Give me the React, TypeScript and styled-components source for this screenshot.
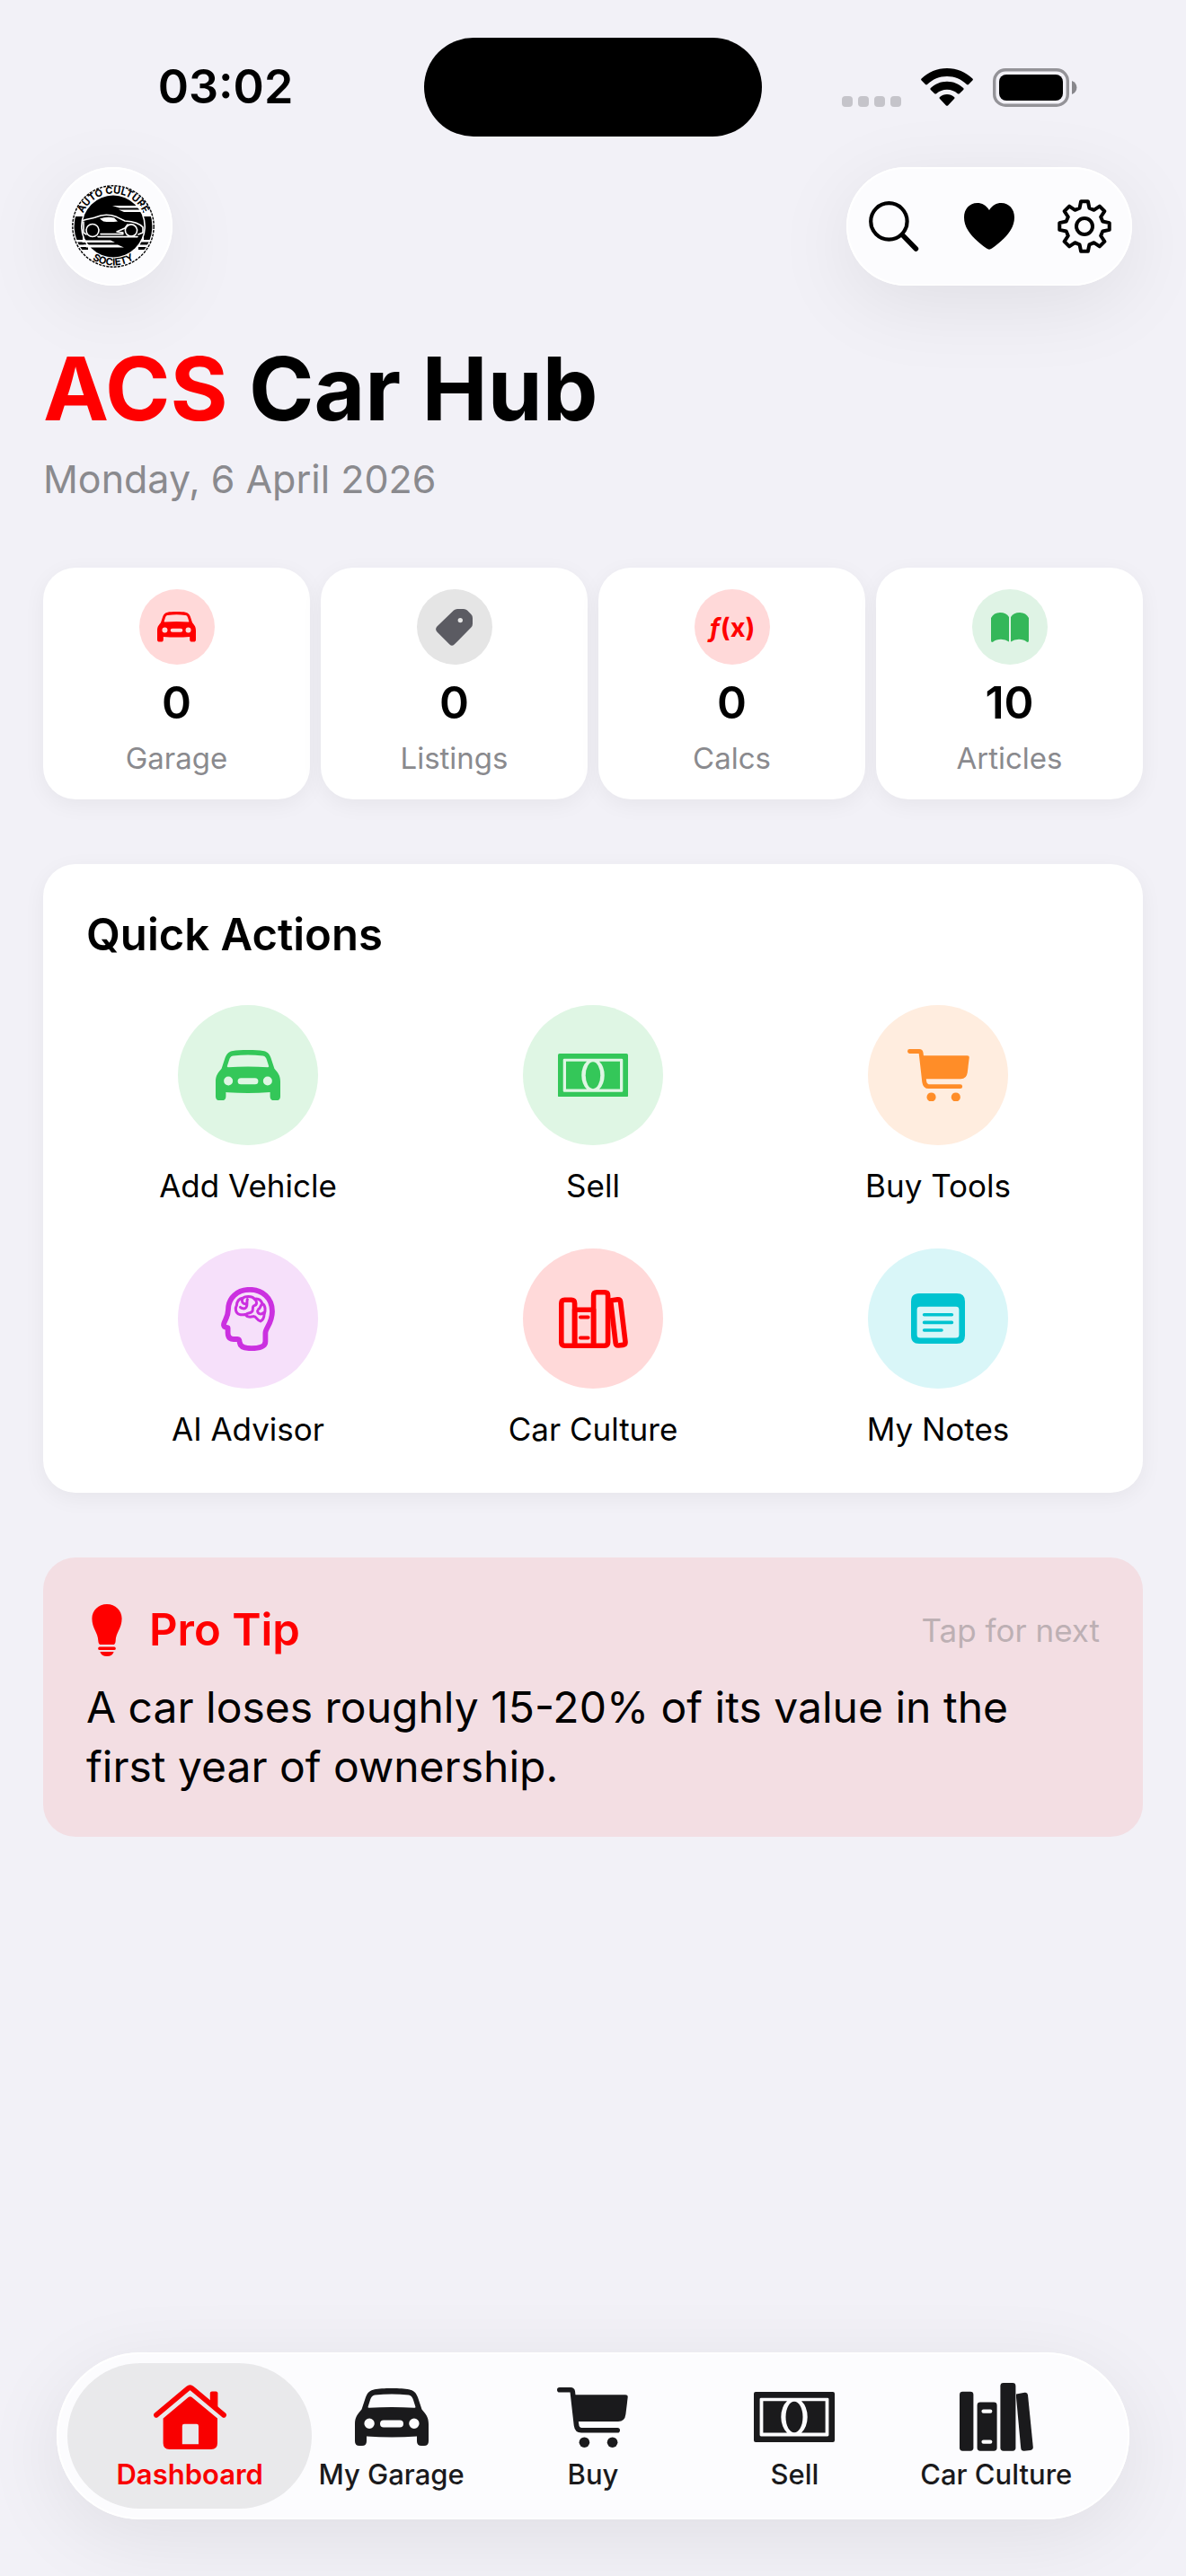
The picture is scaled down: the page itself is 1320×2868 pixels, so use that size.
import { ReactNode, useState } from 'react';
import styled, { createGlobalStyle } from 'styled-components';

const TIPS = [
  'A car loses roughly 15-20% of its value in the first year of ownership.',
  'Check your tyre pressures at least once a month, and always when they are cold.',
];

type IconProps = { width: number };

const CarIcon = ({ width }: IconProps) => (
  <svg width={width} viewBox="0 0 82 64" fill="currentColor" aria-hidden="true">
    <path
      fillRule="evenodd"
      d="M41 0C49 0 56 .4 60 1.2C65 2 68 4.5 70 10L74.5 23.5C79 29 82 32 82 40V59Q82 64 77 64H74Q69 64 69 59V53.5Q55 54.6 41 54.6Q27 54.6 13 53.5V59Q13 64 8 64H5Q0 64 0 59V40C0 32 3 29 7.5 23.5L12 10C14 4.5 17 2 22 1.2C26 .4 33 0 41 0ZM22 7.4C19 8 18 10 17 13L14.6 20.5Q14.3 22 16 21.8Q28 21 41 21Q54 21 66 21.8Q67.7 22 67.4 20.5L65 13C64 10 63 8 60 7.4Q50 6.4 41 6.4Q32 6.4 22 7.4ZM10.4 39.3a5.7 5.7 0 1 0 11.4 0a5.7 5.7 0 1 0 -11.4 0ZM60.2 39.3a5.7 5.7 0 1 0 11.4 0a5.7 5.7 0 1 0 -11.4 0ZM32 35.6a4 4 0 0 0 0 8H50a4 4 0 0 0 0 -8Z"
    />
  </svg>
);

const BanknoteIcon = ({ width }: IconProps) => (
  <svg width={width} viewBox="0 0 90 56" fill="currentColor" aria-hidden="true">
    <path
      fillRule="evenodd"
      d="M2 0H88Q90 0 90 2V54Q90 56 88 56H2Q0 56 0 54V2Q0 0 2 0ZM8 6.7Q6.6 6.7 6.6 8V48Q6.6 49.4 8 49.4H82Q83.4 49.4 83.4 48V8Q83.4 6.7 82 6.7Z"
    />
    <path d="M10.4 10.2H37A13.5 20.5 0 0 0 37 45.6H10.4Z" />
    <path d="M79.6 10.2H53A13.5 20.5 0 0 1 53 45.6H79.6Z" />
    <ellipse cx="45" cy="28" rx="9.5" ry="17.2" />
  </svg>
);

const CartIcon = ({ width }: IconProps) => (
  <svg width={width} viewBox="0 0 79 67" fill="currentColor" aria-hidden="true">
    <path
      d="M2.8 2.8H15Q17 2.8 17.3 5L21.5 42Q22.3 47.7 27 47.7H67.2"
      fill="none"
      stroke="currentColor"
      strokeWidth="5.6"
      strokeLinecap="round"
      strokeLinejoin="round"
    />
    <path d="M18 8.2H76Q79 8.2 78.7 11L76.4 30Q75.4 38 68 38H21Z" />
    <circle cx="30.4" cy="61.2" r="5.8" />
    <circle cx="61.6" cy="61.2" r="5.8" />
  </svg>
);

const HouseIcon = () => (
  <svg width="81" viewBox="0 0 81 72" fill="currentColor" aria-hidden="true">
    <path
      d="M3 33.8L38.2 4.2Q40.5 2.3 42.8 4.2L78 33.8"
      fill="none"
      stroke="currentColor"
      strokeWidth="5.8"
      strokeLinecap="round"
    />
    <path d="M62.8 20V9.6Q62.8 7.6 64.8 7.6H69.4Q71.4 7.6 71.4 9.6V27.4Z" />
    <path
      fillRule="evenodd"
      d="M38.6 14Q40.6 12.3 42.6 14L71 37.4V65Q71 72 64 72H17.6Q10.6 72 10.6 65V37.4ZM34 43.8Q31.8 43.8 31.8 46V66.2H50V46Q50 43.8 47.8 43.8Z"
    />
  </svg>
);

const BooksIcon = () => (
  <svg width="82" viewBox="0 0 82 76" fill="currentColor" aria-hidden="true">
    <rect x="0" y="9.7" width="15.4" height="66" rx="3.4" />
    <path
      fillRule="evenodd"
      d="M23 21.6H38.2Q41.6 21.6 41.6 25V72.3Q41.6 75.7 38.2 75.7H23Q19.6 75.7 19.6 72.3V25Q19.6 21.6 23 21.6ZM26.6 29.4a2.2 2.2 0 0 0 0 4.4H34.2a2.2 2.2 0 0 0 0 -4.4ZM26.6 63.4a2.2 2.2 0 0 0 0 4.4H34.2a2.2 2.2 0 0 0 0 -4.4Z"
    />
    <rect x="45.4" y="0" width="17" height="75.7" rx="3.4" />
    <path d="M63 12.6L72.4 10.8Q75.6 10.2 76 13.4L81.8 71.4Q82 74.4 79 74.9L72 75.8Q68.6 76.2 68.2 72.6L63 16Z" />
  </svg>
);

const BooksOutlineIcon = () => (
  <svg width="77" viewBox="0 0 77 65" fill="none" stroke="currentColor" strokeWidth="5.6" strokeLinejoin="round" aria-hidden="true">
    <path d="M17.6 62.2H6.4Q2.8 62.2 2.8 58.6V15Q2.8 11.2 6.4 11.2H14Q17.6 11.2 17.6 15Z" />
    <path d="M17.6 22.2H38.6V62.2H17.6Z" />
    <path d="M38.6 62.2V6.4Q38.6 2.8 42.2 2.8H51Q54.6 2.8 54.6 6.4V58.6Q54.6 62.2 51 62.2Z" />
    <path d="M57.6 12L65.4 10.8Q68.2 10.6 68.6 13.4L74 58Q74.2 61 71.4 61.4L66.4 62Q63.6 62.2 63.2 59.4Z" />
    <path d="M24 30.6H32.6M24 53.4H32.6" strokeWidth="4" strokeLinecap="round" />
  </svg>
);

const BrainHeadIcon = () => (
  <svg width="60" viewBox="0 0 60 71" fill="none" stroke="currentColor" strokeWidth="5.8" strokeLinecap="round" strokeLinejoin="round" aria-hidden="true">
    <path d="M32 2.8C18 2.8 8 12 8 25C8 31 6.4 33.6 4 38.4C2.4 41.8 2.6 44.2 5.6 44.8L7.6 45.4V51C7.6 56 10 58 14 58H18.4C20.6 58 20.6 60 20.8 62C21.4 66.6 26 68.2 34 68.2C42 68.2 49.4 66.4 49.4 60.6V51C49.4 46 57 40 57 27C57 12 46 2.8 32 2.8Z" />
    <g strokeWidth="3">
      <path d="M24 12.2C19.4 13 17.6 17 17.4 20.4C15.4 23.4 16 29 20.4 30.4C23.4 31.4 26 30.6 27.6 30.4C28.4 33.6 33.4 33.2 36 32.6C40 32.6 39.8 37.6 44 38C46.8 36.4 48 33.6 48 30.6C49.8 26 49.6 20.4 46 18.4C44.4 14.4 41 12.6 37.4 13.2C34 9.4 27 10 24 12.2Z" />
      <path d="M24 12.6C22.4 16 24 19 27.6 18.6M29.4 13.6C28 17.4 30 20 28 22.6C26 25 22.8 23.6 21.4 22.4M37.6 13.6C40.6 16 40 20 37 20.6C34 21.4 36.6 25 34.4 27.4C32.4 29.4 29.4 28.6 28 30.2M46 18.8C43.4 20 44.4 23.4 41.6 24.6M47.6 28.4C45 31 41 30.4 40.6 26.6" />
    </g>
  </svg>
);

const NotesIcon = () => (
  <svg width="60" viewBox="0 0 60 56" fill="currentColor" aria-hidden="true">
    <path
      fillRule="evenodd"
      d="M9 0H51Q60 0 60 9V47Q60 56 51 56H9Q0 56 0 47V9Q0 0 9 0ZM10 14.8Q6.6 14.8 6.6 18.2V46Q6.6 49.6 10.2 49.6H49.8Q53.4 49.6 53.4 46V18.2Q53.4 14.8 50 14.8Z"
    />
    <path d="M14.6 23.8H45.4M14.6 32.4H45.4M14.6 41H34" stroke="currentColor" strokeWidth="3.6" strokeLinecap="round" />
  </svg>
);

const TagIcon = () => (
  <svg width="41" viewBox="0 0 41 41" fill="currentColor" aria-hidden="true">
    <path
      fillRule="evenodd"
      d="M24 0H31Q33.4 0 35 1.6L39.4 6Q41 7.6 41 10V16.6Q41 19 39.4 20.6L20.6 39.6Q18 42 15.4 39.6L1.4 25.4Q-1.2 22.4 1.4 19.6L20 1.6Q21.8 0 24 0ZM24.6 12.6a2.7 2.7 0 1 0 5.4 0a2.7 2.7 0 1 0 -5.4 0Z"
    />
  </svg>
);

const OpenBookIcon = () => (
  <svg width="42" viewBox="0 0 42 33" fill="currentColor" aria-hidden="true">
    <path d="M0 6Q3 0 10 0Q17 0 20 5V32.4Q16.4 29.8 11 29.8Q5.6 29.8 2.4 32.6Q0 33.6 0 31Z" />
    <path d="M42 6Q39 0 32 0Q25 0 22 5V32.4Q25.6 29.8 31 29.8Q36.4 29.8 39.6 32.6Q42 33.6 42 31Z" />
  </svg>
);

const BulbIcon = () => (
  <svg width="34" viewBox="0 0 34 58" fill="currentColor" aria-hidden="true">
    <path d="M17 0C26.5 0 33.6 7 33.6 16C33.6 27 27 31 26.6 41.4Q26.4 45 23.4 45H10.6Q7.6 45 7.4 41.4C7 31 .4 27 .4 16C.4 7 7.5 0 17 0Z" />
    <rect x="7.2" y="47.6" width="19.6" height="3.4" rx="1.6" />
    <path d="M9.4 53H24.6Q23.4 58 17 58Q10.6 58 9.4 53Z" />
  </svg>
);

const SearchIcon = () => (
  <svg width="56" viewBox="0 0 56 56" fill="none" stroke="currentColor" strokeLinecap="round" aria-hidden="true">
    <circle cx="22.4" cy="22.4" r="20.2" strokeWidth="4.2" />
    <path d="M38.4 38.6L52.4 53" strokeWidth="5.6" />
  </svg>
);

const HeartIcon = () => (
  <svg width="56" viewBox="0 0 56 52" fill="currentColor" aria-hidden="true">
    <path d="M28 8C31.4 2.6 36 0 41.4 0C50 0 56 6.8 56 16C56 29.6 45 40.6 31 50.6Q28 52.8 25 50.6C11 40.6 0 29.6 0 16C0 6.8 6 0 14.6 0C20 0 24.6 2.6 28 8Z" />
  </svg>
);

// eight teeth around the centre, each with a wider base than tip
const gearPath = Array.from({ length: 8 })
  .flatMap((_, i) =>
    [
      [21, -15],
      [28, -8],
      [28, 8],
      [21, 15],
    ].map(([r, offset]) => {
      const angle = ((i * 45 + offset) * Math.PI) / 180;
      return `${(30 + r * Math.sin(angle)).toFixed(2)} ${(30 - r * Math.cos(angle)).toFixed(2)}`;
    })
  )
  .join('L');

const GearIcon = () => (
  <svg width="60" viewBox="0 0 60 60" fill="none" stroke="currentColor" strokeWidth="4" strokeLinejoin="round" aria-hidden="true">
    <path d={`M${gearPath}Z`} />
    <circle cx="30" cy="30" r="9" />
  </svg>
);

const WifiIcon = () => (
  <svg width="58" viewBox="0 0 58 42" fill="currentColor" aria-hidden="true">
    <path d="M29 0C40 0 50 4.4 57.4 11.6Q58.4 12.6 57.4 13.6L53 18Q52 18.8 51 18C45 12.2 37.4 9 29 9C20.6 9 13 12.2 7 18Q6 18.8 5 18L.6 13.6Q-.4 12.6 .6 11.6C8 4.4 18 0 29 0Z" />
    <path d="M29 14.8C36 14.8 42.4 17.6 47.2 22Q48.2 23 47.2 24L42.8 28.2Q41.8 29 40.8 28.2C37.6 25.4 33.6 23.8 29 23.8C24.4 23.8 20.4 25.4 17.2 28.2Q16.2 29 15.2 28.2L10.8 24Q9.8 23 10.8 22C15.6 17.6 22 14.8 29 14.8Z" />
    <path d="M29 29C32 29 34.8 30.2 37 32Q38 33 37 34L30 41.4Q29 42.2 28 41.4L21 34Q20 33 21 32C23.2 30.2 26 29 29 29Z" />
  </svg>
);

const BatteryIcon = () => (
  <svg width="94" viewBox="0 0 94 43" aria-hidden="true">
    <rect x="1.7" y="1.7" width="81.6" height="39.6" rx="12.4" fill="none" stroke="#949398" strokeWidth="3.4" />
    <rect x="7" y="7" width="71" height="29" rx="8" />
    <path d="M88 14Q93.4 16.4 93.4 21.5Q93.4 26.6 88 29Z" fill="#88878c" />
  </svg>
);

const SocietyLogo = () => (
  <LogoSvg viewBox="-4 -4 100 100" role="img" aria-label="Auto Culture Society">
    <defs>
      <path id="logo-top" d="M9.5 46A36.5 36.5 0 0 1 82.5 46" />
      <path id="logo-bottom" d="M2.5 46A43.5 43.5 0 0 0 89.5 46" />
      <clipPath id="logo-ring">
        <path clipRule="evenodd" d="M2.6 46a43.4 43.4 0 1 0 86.8 0a43.4 43.4 0 1 0 -86.8 0ZM10 46a36 36 0 1 0 72 0a36 36 0 1 0 -72 0Z" />
      </clipPath>
    </defs>
    <circle cx="46" cy="46" r="45.2" fill="none" stroke="#000" strokeWidth="1.4" strokeDasharray="3 1.2" />
    <circle cx="46" cy="46" r="34.4" />
    <g clipPath="url(#logo-ring)">
      <path d="M0 35H12V61H0ZM80 35H92V61H80ZM0 63.5H16V66.5H0ZM76 63.5H92V66.5H76ZM0 69H18V72H0ZM74 69H92V72H74Z" />
    </g>
    <g fontFamily="Inter, sans-serif" fontSize="11" fontWeight="700" textAnchor="middle">
      <text>
        <textPath href="#logo-top" startOffset="50%">AUTO CULTURE</textPath>
      </text>
      <text>
        <textPath href="#logo-bottom" startOffset="50%">SOCIETY</textPath>
      </text>
    </g>
    <g fill="none" stroke="#fff" strokeWidth="1.6" strokeLinecap="round" strokeLinejoin="round">
      <path d="M12 39.5C18 37.6 22 37.4 26 36C34 32.4 42 32.4 50 35.6L59 40C68 40.6 75 42 79 47V53L74 55" />
      <path d="M13 41V53L16 55" />
      <circle cx="23" cy="50.5" r="7" fill="#000" />
      <circle cx="66" cy="50.5" r="6.6" fill="#000" />
      <path d="M32 54.6H57M29 57.6H73M59 48L50 52L57 53M59 48L62 44" />
    </g>
    <path
      fill="#fff"
      d="M31 37.6Q39 34.6 47 36.6L51 40.4Q42 41.6 35 40.4ZM45 23H77V25.4H53ZM52 27.6H79V30H58ZM10 61.6H43L48 64H12ZM13 66.4H51L58 69.4H16Z"
    />
  </LogoSvg>
);

type Tint = 'red' | 'gray' | 'darkGreen' | 'green' | 'orange' | 'purple' | 'cyan';

const TINTS: Record<Tint, { color: string; background: string }> = {
  red: { color: '#ff0000', background: '#ffd9d9' },
  gray: { color: '#5b5b62', background: '#e5e5e5' },
  darkGreen: { color: '#34b759', background: '#dff3e5' },
  green: { color: '#34c759', background: '#dff6e4' },
  orange: { color: '#ff8d28', background: '#ffeddf' },
  purple: { color: '#cb30e0', background: '#f6e0fa' },
  cyan: { color: '#00c3d0', background: '#d9f6f8' },
};

const STATS: { label: string; value: number; tint: Tint; icon: ReactNode }[] = [
  { label: 'Garage', value: 0, tint: 'red', icon: <CarIcon width={43} /> },
  { label: 'Listings', value: 0, tint: 'gray', icon: <TagIcon /> },
  {
    label: 'Calcs',
    value: 0,
    tint: 'red',
    icon: (
      <span>
        <i>ƒ</i>(x)
      </span>
    ),
  },
  { label: 'Articles', value: 10, tint: 'darkGreen', icon: <OpenBookIcon /> },
];

const ACTIONS: { label: string; tint: Tint; icon: ReactNode }[] = [
  { label: 'Add Vehicle', tint: 'green', icon: <CarIcon width={72} /> },
  { label: 'Sell', tint: 'green', icon: <BanknoteIcon width={78} /> },
  { label: 'Buy Tools', tint: 'orange', icon: <CartIcon width={69} /> },
  { label: 'AI Advisor', tint: 'purple', icon: <BrainHeadIcon /> },
  { label: 'Car Culture', tint: 'red', icon: <BooksOutlineIcon /> },
  { label: 'My Notes', tint: 'cyan', icon: <NotesIcon /> },
];

const TABS: { label: string; icon: ReactNode }[] = [
  { label: 'Dashboard', icon: <HouseIcon /> },
  { label: 'My Garage', icon: <CarIcon width={82} /> },
  { label: 'Buy', icon: <CartIcon width={79} /> },
  { label: 'Sell', icon: <BanknoteIcon width={90} /> },
  { label: 'Car Culture', icon: <BooksIcon /> },
];

export default function App() {
  const [tip, setTip] = useState(0);
  const [activeTab, setActiveTab] = useState('Dashboard');

  return (
    <Page>
      <GlobalStyle />
      <StatusBar>
        <Clock>03:02</Clock>
        <Island />
        <StatusIcons>
          <SignalDots>
            <Dot />
            <Dot />
            <Dot />
            <Dot />
          </SignalDots>
          <WifiIcon />
          <BatteryIcon />
        </StatusIcons>
      </StatusBar>

      <Header>
        <LogoButton aria-label="About">
          <SocietyLogo />
        </LogoButton>
        <Toolbar>
          <ToolbarButton aria-label="Search">
            <SearchIcon />
          </ToolbarButton>
          <ToolbarButton aria-label="Favourites">
            <HeartIcon />
          </ToolbarButton>
          <ToolbarButton aria-label="Settings">
            <GearIcon />
          </ToolbarButton>
        </Toolbar>
      </Header>

      <Content>
        <Heading>
          <Title>
            <Accent>ACS</Accent> Car Hub
          </Title>
          <Today>Monday, 6 April 2026</Today>
        </Heading>

        <Stats>
          {STATS.map(({ label, value, tint, icon }) => (
            <StatCard key={label}>
              <StatIcon $tint={tint}>{icon}</StatIcon>
              <StatValue>{value}</StatValue>
              <StatLabel>{label}</StatLabel>
            </StatCard>
          ))}
        </Stats>

        <QuickActions>
          <SectionTitle>Quick Actions</SectionTitle>
          <ActionGrid>
            {ACTIONS.map(({ label, tint, icon }) => (
              <ActionButton key={label}>
                <ActionIcon $tint={tint}>{icon}</ActionIcon>
                {label}
              </ActionButton>
            ))}
          </ActionGrid>
        </QuickActions>

        <TipCard onClick={() => setTip((tip + 1) % TIPS.length)}>
          <TipHeader>
            <BulbIcon />
            <TipTitle>Pro Tip</TipTitle>
            <TipHint>Tap for next</TipHint>
          </TipHeader>
          <TipText>{TIPS[tip]}</TipText>
        </TipCard>
      </Content>

      <TabBar>
        {TABS.map(({ label, icon }) => (
          <Tab key={label} $active={label === activeTab} onClick={() => setActiveTab(label)}>
            <TabIcon>{icon}</TabIcon>
            {label}
          </Tab>
        ))}
      </TabBar>
    </Page>
  );
}

const GlobalStyle = createGlobalStyle`
  * {
    box-sizing: border-box;
  }
  body {
    margin: 0;
    background: #f2f1f7;
    color: #000;
    font-family: Inter, 'Liberation Sans', sans-serif;
  }
  button {
    margin: 0;
    padding: 0;
    border: 0;
    background: none;
    color: inherit;
    font: inherit;
    cursor: pointer;
  }
  svg {
    display: block;
    flex-shrink: 0;
  }
`;

const Page = styled.div`
  min-height: 100vh;
  display: flex;
  flex-direction: column;
`;

const StatusBar = styled.div`
  display: grid;
  grid-template-columns: 1fr 376px 1fr;
  align-items: center;
  padding-top: 42px;
`;

const Clock = styled.div`
  padding-left: 30px;
  text-align: center;
  font-size: 52px;
  line-height: 62px;
  font-weight: 600;
`;

const Island = styled.div`
  height: 110px;
  border-radius: 55px;
  background: #000;
`;

const StatusIcons = styled.div`
  display: flex;
  justify-content: center;
  align-items: center;
  gap: 22px;
  padding-right: 32px;
`;

const SignalDots = styled.div`
  display: flex;
  align-self: flex-end;
  gap: 6px;
`;

const Dot = styled.span`
  width: 12px;
  height: 12px;
  border-radius: 4px;
  background: #c5c4ca;
`;

const Header = styled.header`
  display: flex;
  justify-content: space-between;
  padding: 34px 60px 0;
`;

const LogoButton = styled.button`
  display: flex;
  justify-content: center;
  align-items: center;
  width: 132px;
  height: 132px;
  border-radius: 50%;
  background: #fcfcfe;
  box-shadow: inset 0 0 0 2px #fff, 0 20px 90px rgba(0, 0, 0, 0.08);
`;

const LogoSvg = styled.svg`
  width: 100px;
  height: 100px;
  overflow: visible;
`;

const Toolbar = styled.div`
  display: flex;
  height: 132px;
  border-radius: 66px;
  background: #fcfcfe;
  box-shadow: inset 0 0 0 2px #fff, 0 20px 90px rgba(0, 0, 0, 0.08);
`;

const ToolbarButton = styled.button`
  display: flex;
  justify-content: center;
  align-items: center;
  width: 106px;
`;

const Content = styled.main`
  display: flex;
  flex-direction: column;
  gap: 72px;
  padding: 55px 48px 72px;
`;

const Heading = styled.div`
  display: flex;
  flex-direction: column;
  gap: 13px;
`;

const Title = styled.h1`
  margin: 0;
  font-size: 98px;
  line-height: 120px;
  font-weight: 700;
`;

const Accent = styled.span`
  color: #ff0000;
`;

const Today = styled.div`
  font-size: 43px;
  line-height: 54px;
  color: #8a8a8e;
`;

const Stats = styled.div`
  display: grid;
  grid-template-columns: repeat(4, 1fr);
  gap: 12px;
`;

const StatCard = styled.div`
  display: flex;
  flex-direction: column;
  align-items: center;
  gap: 12px;
  padding: 24px 24px 26px;
  border-radius: 36px;
  background: #fff;
  box-shadow: 0 6px 24px rgba(0, 0, 0, 0.05);
`;

const IconCircle = styled.span<{ $tint: Tint }>`
  display: flex;
  justify-content: center;
  align-items: center;
  border-radius: 50%;
  color: ${({ $tint }) => TINTS[$tint].color};
  background: ${({ $tint }) => TINTS[$tint].background};
`;

const StatIcon = styled(IconCircle)`
  width: 84px;
  height: 84px;
  font-size: 29px;
  font-weight: 700;
`;

const StatValue = styled.div`
  font-size: 50px;
  line-height: 60px;
  font-weight: 600;
`;

const StatLabel = styled.div`
  font-size: 33px;
  line-height: 40px;
  color: #8a8a8e;
`;

const QuickActions = styled.section`
  padding: 48px 48px 49px;
  border-radius: 36px;
  background: #fff;
  box-shadow: 0 6px 24px rgba(0, 0, 0, 0.05);
`;

const SectionTitle = styled.h2`
  margin: 0 0 48px;
  font-size: 49px;
  line-height: 61px;
  font-weight: 600;
`;

const ActionGrid = styled.div`
  display: grid;
  grid-template-columns: repeat(3, 1fr);
  gap: 48px 24px;
`;

const ActionButton = styled.button`
  display: flex;
  flex-direction: column;
  align-items: center;
  gap: 24px;
  font-size: 35px;
  line-height: 43px;
`;

const ActionIcon = styled(IconCircle)`
  width: 156px;
  height: 156px;
`;

const TipCard = styled.button`
  display: flex;
  flex-direction: column;
  gap: 20px;
  padding: 48px 48px 45px;
  border-radius: 36px;
  background: #f3dee3;
  text-align: left;
`;

const TipHeader = styled.span`
  display: flex;
  align-items: center;
  gap: 30px;
  align-self: stretch;
  padding-left: 6px;
  color: #ff0000;
`;

const TipTitle = styled.span`
  font-size: 49px;
  line-height: 66px;
  font-weight: 600;
`;

const TipHint = styled.span`
  margin-left: auto;
  font-size: 35px;
  line-height: 43px;
  color: #bdb0b4;
`;

// capped so the copy keeps a comfortable margin on the right
const TipText = styled.span`
  max-width: 1080px;
  font-size: 48px;
  line-height: 66px;
`;

const TabBar = styled.nav`
  display: grid;
  grid-template-columns: repeat(5, 1fr);
  margin: auto 63px 63px;
  padding: 12px 36px;
  border-radius: 93px;
  background: #fcfcfe;
  box-shadow: inset 0 0 0 2px #fff, 0 20px 90px rgba(0, 0, 0, 0.08);
`;

const Tab = styled.button<{ $active: boolean }>`
  display: flex;
  flex-direction: column;
  align-items: center;
  gap: 8px;
  margin: 0 -24px;
  padding: 22px 0 20px;
  border-radius: 81px;
  font-size: 31px;
  line-height: 36px;
  font-weight: ${({ $active }) => ($active ? 600 : 500)};
  color: ${({ $active }) => ($active ? '#f90000' : '#1a1a1c')};
  background: ${({ $active }) => ($active ? '#e9e9eb' : 'transparent')};
`;

const TabIcon = styled.span`
  display: flex;
  align-items: center;
  height: 76px;
`;
